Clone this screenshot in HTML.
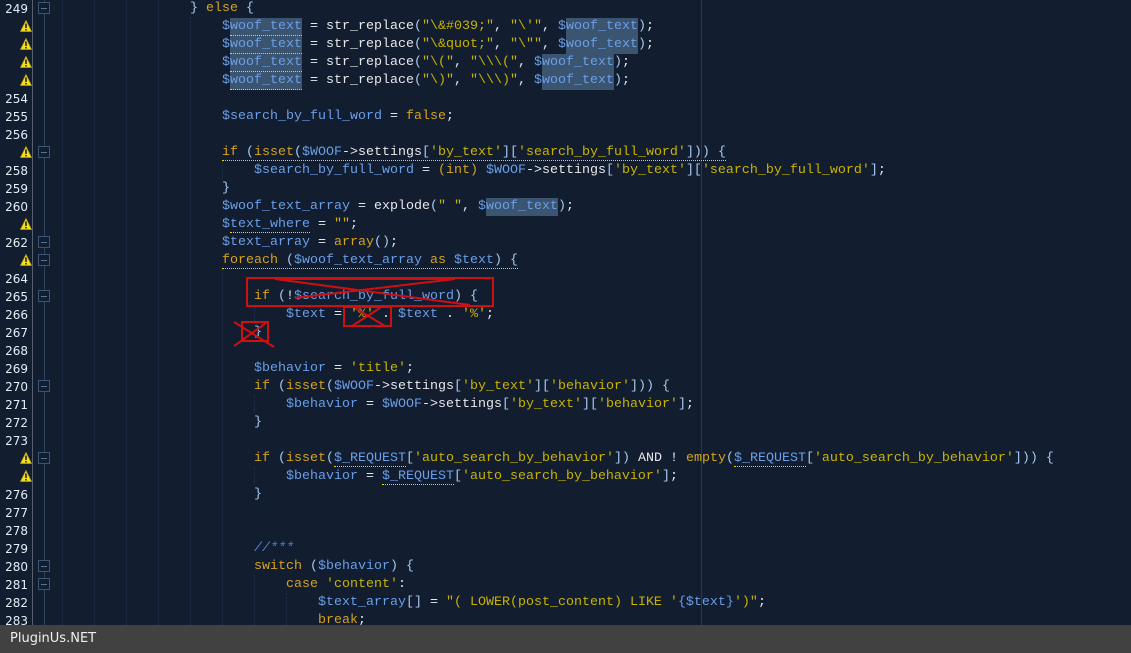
<!DOCTYPE html>
<html><head><meta charset="utf-8"><style>
html,body{margin:0;padding:0}
body{width:1131px;height:653px;background:#121d30;position:relative;overflow:hidden;font-family:"Liberation Mono",monospace}
.ln{position:absolute;left:0;width:28px;text-align:right;font:12px/18px "DejaVu Sans",sans-serif;color:#e6ecf4;height:18px;margin-top:1px}
.c{position:absolute;white-space:pre;font-size:13.33px;line-height:18px;height:18px;color:#e8e8e8;margin-top:1px}
.v{color:#6a9fe8}.k{color:#d5a31c}.s{color:#c8b400}.p{color:#a8c8f0}.cm{color:#4d84d8;font-style:italic}
.h{background:#3b5470;display:inline-block;height:18px;vertical-align:top;box-sizing:border-box}
.u{border-bottom:1px dotted #e8d800}
.g{position:absolute;top:0;height:625px;border-left:1px dotted #223149}
.warn{position:absolute;left:20px;width:12px;height:12px}
.fold{position:absolute;left:38px;width:10px;height:10px;border:1px solid #3d5574;background:#121d30}
.fold:after{content:"";position:absolute;left:2px;top:5px;width:6px;height:1px;background:#5a7496}
</style></head><body>
<div style="position:absolute;left:32px;top:0;width:1px;height:625px;background:#56606e"></div>
<div style="position:absolute;left:44px;top:0;width:1px;height:625px;background:#2e4460"></div>
<div class="g" style="left:62px"></div><div class="g" style="left:94px"></div><div class="g" style="left:126px"></div><div class="g" style="left:158px"></div>
<div class="g" style="left:190px;top:17px;height:608px"></div>
<div class="g" style="left:222px;top:161px;height:18px"></div>
<div class="g" style="left:222px;top:269px;height:356px"></div>
<div class="g" style="left:254px;top:305px;height:18px"></div>
<div class="g" style="left:254px;top:395px;height:18px"></div>
<div class="g" style="left:254px;top:467px;height:18px"></div>
<div class="g" style="left:254px;top:575px;height:50px"></div>
<div class="g" style="left:286px;top:593px;height:32px"></div>
<div style="position:absolute;left:701px;top:0;width:1px;height:625px;background:#2a3a52"></div>

<div class="ln" style="top:-1px">249</div>
<div class="ln" style="top:89px">254</div>
<div class="ln" style="top:107px">255</div>
<div class="ln" style="top:125px">256</div>
<div class="ln" style="top:161px">258</div>
<div class="ln" style="top:179px">259</div>
<div class="ln" style="top:197px">260</div>
<div class="ln" style="top:233px">262</div>
<div class="ln" style="top:269px">264</div>
<div class="ln" style="top:287px">265</div>
<div class="ln" style="top:305px">266</div>
<div class="ln" style="top:323px">267</div>
<div class="ln" style="top:341px">268</div>
<div class="ln" style="top:359px">269</div>
<div class="ln" style="top:377px">270</div>
<div class="ln" style="top:395px">271</div>
<div class="ln" style="top:413px">272</div>
<div class="ln" style="top:431px">273</div>
<div class="ln" style="top:485px">276</div>
<div class="ln" style="top:503px">277</div>
<div class="ln" style="top:521px">278</div>
<div class="ln" style="top:539px">279</div>
<div class="ln" style="top:557px">280</div>
<div class="ln" style="top:575px">281</div>
<div class="ln" style="top:593px">282</div>
<div class="ln" style="top:611px">283</div>

<svg width="0" height="0" style="position:absolute"><defs><symbol id="w" viewBox="0 0 12 12"><path d="M6 0.5 L11.5 11.5 L0.5 11.5 Z" fill="#f2e020" stroke="#b8a000" stroke-width="0.8"/><rect x="5.2" y="3.5" width="1.6" height="4.5" fill="#222"/><rect x="5.2" y="9" width="1.6" height="1.5" fill="#222"/></symbol></defs></svg>
<svg class="warn" style="top:20px"><use href="#w"/></svg>
<svg class="warn" style="top:38px"><use href="#w"/></svg>
<svg class="warn" style="top:56px"><use href="#w"/></svg>
<svg class="warn" style="top:74px"><use href="#w"/></svg>
<svg class="warn" style="top:146px"><use href="#w"/></svg>
<svg class="warn" style="top:218px"><use href="#w"/></svg>
<svg class="warn" style="top:254px"><use href="#w"/></svg>
<svg class="warn" style="top:452px"><use href="#w"/></svg>
<svg class="warn" style="top:470px"><use href="#w"/></svg>

<div class="fold" style="top:2px"></div>
<div class="fold" style="top:146px"></div>
<div class="fold" style="top:236px"></div>
<div class="fold" style="top:254px"></div>
<div class="fold" style="top:290px"></div>
<div class="fold" style="top:380px"></div>
<div class="fold" style="top:452px"></div>
<div class="fold" style="top:560px"></div>
<div class="fold" style="top:578px"></div>

<div class="c" style="left:190px;top:-1px"><span class="p">}</span> <span class="k">else</span> <span class="p">{</span></div>
<div class="c" style="left:222px;top:17px"><span class="v">$<span class="h u">woof_text</span></span> = str_replace<span class="p">(</span><span class="s">"\&amp;#039;"</span>, <span class="s">"\'"</span>, <span class="v">$<span class="h">woof_text</span></span><span class="p">)</span>;</div>
<div class="c" style="left:222px;top:35px"><span class="v">$<span class="h u">woof_text</span></span> = str_replace<span class="p">(</span><span class="s">"\&amp;quot;"</span>, <span class="s">"\""</span>, <span class="v">$<span class="h">woof_text</span></span><span class="p">)</span>;</div>
<div class="c" style="left:222px;top:53px"><span class="v">$<span class="h u">woof_text</span></span> = str_replace<span class="p">(</span><span class="s">"\("</span>, <span class="s">"\\\("</span>, <span class="v">$<span class="h">woof_text</span></span><span class="p">)</span>;</div>
<div class="c" style="left:222px;top:71px"><span class="v">$<span class="h u">woof_text</span></span> = str_replace<span class="p">(</span><span class="s">"\)"</span>, <span class="s">"\\\)"</span>, <span class="v">$<span class="h">woof_text</span></span><span class="p">)</span>;</div>
<div class="c" style="left:222px;top:107px"><span class="v">$search_by_full_word</span> = <span class="k">false</span>;</div>
<div class="c" style="left:222px;top:143px"><span class="u"><span class="k">if</span> <span class="p">(</span><span class="k">isset</span><span class="p">(</span><span class="v">$WOOF</span>-&gt;settings<span class="p">[</span><span class="s">'by_text'</span><span class="p">][</span><span class="s">'search_by_full_word'</span><span class="p">]))</span> <span class="p">{</span></span></div>
<div class="c" style="left:254px;top:161px"><span class="v">$search_by_full_word</span> = <span class="k">(int)</span> <span class="v">$WOOF</span>-&gt;settings<span class="p">[</span><span class="s">'by_text'</span><span class="p">][</span><span class="s">'search_by_full_word'</span><span class="p">]</span>;</div>
<div class="c" style="left:222px;top:179px"><span class="p">}</span></div>
<div class="c" style="left:222px;top:197px"><span class="v">$woof_text_array</span> = explode<span class="p">(</span><span class="s">" "</span>, <span class="v">$<span class="h">woof_text</span></span><span class="p">)</span>;</div>
<div class="c" style="left:222px;top:215px"><span class="v">$<span class="u">text_where</span></span> = <span class="s">""</span>;</div>
<div class="c" style="left:222px;top:233px"><span class="v">$text_array</span> = <span class="k">array</span><span class="p">()</span>;</div>
<div class="c" style="left:222px;top:251px"><span class="u"><span class="k">foreach</span> <span class="p">(</span><span class="v">$woof_text_array</span> <span class="k">as</span> <span class="v">$text</span><span class="p">)</span> <span class="p">{</span></span></div>
<div class="c" style="left:254px;top:287px"><span class="k">if</span> <span class="p">(</span>!<span class="v">$search_by_full_word</span><span class="p">)</span> <span class="p">{</span></div>
<div class="c" style="left:286px;top:305px"><span class="v">$text</span> = <span class="s">'%'</span> . <span class="v">$text</span> . <span class="s">'%'</span>;</div>
<div class="c" style="left:254px;top:323px"><span class="p">}</span></div>
<div class="c" style="left:254px;top:359px"><span class="v">$behavior</span> = <span class="s">'title'</span>;</div>
<div class="c" style="left:254px;top:377px"><span class="k">if</span> <span class="p">(</span><span class="k">isset</span><span class="p">(</span><span class="v">$WOOF</span>-&gt;settings<span class="p">[</span><span class="s">'by_text'</span><span class="p">][</span><span class="s">'behavior'</span><span class="p">]))</span> <span class="p">{</span></div>
<div class="c" style="left:286px;top:395px"><span class="v">$behavior</span> = <span class="v">$WOOF</span>-&gt;settings<span class="p">[</span><span class="s">'by_text'</span><span class="p">][</span><span class="s">'behavior'</span><span class="p">]</span>;</div>
<div class="c" style="left:254px;top:413px"><span class="p">}</span></div>
<div class="c" style="left:254px;top:449px"><span class="k">if</span> <span class="p">(</span><span class="k">isset</span><span class="p">(</span><span class="v"><span class="u">$_REQUEST</span></span><span class="p">[</span><span class="s">'auto_search_by_behavior'</span><span class="p">])</span> AND ! <span class="k">empty</span><span class="p">(</span><span class="v"><span class="u">$_REQUEST</span></span><span class="p">[</span><span class="s">'auto_search_by_behavior'</span><span class="p">]))</span> <span class="p">{</span></div>
<div class="c" style="left:286px;top:467px"><span class="v">$behavior</span> = <span class="v"><span class="u">$_REQUEST</span></span><span class="p">[</span><span class="s">'auto_search_by_behavior'</span><span class="p">]</span>;</div>
<div class="c" style="left:254px;top:485px"><span class="p">}</span></div>
<div class="c" style="left:254px;top:539px"><span class="cm">//***</span></div>
<div class="c" style="left:254px;top:557px"><span class="k">switch</span> <span class="p">(</span><span class="v">$behavior</span><span class="p">)</span> <span class="p">{</span></div>
<div class="c" style="left:286px;top:575px"><span class="k">case</span> <span class="s">'content'</span>:</div>
<div class="c" style="left:318px;top:593px"><span class="v">$text_array</span><span class="p">[]</span> = <span class="s">"( LOWER(post_content) LIKE '<span class="v">{$text}</span>')"</span>;</div>
<div class="c" style="left:318px;top:611px"><span class="k">break</span>;</div>

<svg style="position:absolute;left:0;top:0" width="1131" height="653">
<g stroke="#d01010" stroke-width="2" fill="none">
<rect x="247" y="278" width="246" height="28"/>
<line x1="275" y1="279" x2="455" y2="279"/>
<line x1="275" y1="279" x2="470" y2="305"/>
<line x1="295" y1="298" x2="455" y2="279"/>
<rect x="344" y="307" width="47" height="19"/>
<line x1="355" y1="308" x2="385" y2="326"/>
<line x1="352" y1="326" x2="380" y2="308"/>
<rect x="242" y="322" width="26" height="19"/>
<line x1="234" y1="322" x2="274" y2="347"/>
<line x1="234" y1="346" x2="266" y2="323"/>
</g></svg>

<div style="position:absolute;left:0;top:625px;width:1131px;height:28px;background:#414141;color:#f0f0f0;font:13px/28px 'DejaVu Sans',sans-serif;padding-left:10px;box-sizing:border-box">PluginUs.NET</div>
</body></html>
